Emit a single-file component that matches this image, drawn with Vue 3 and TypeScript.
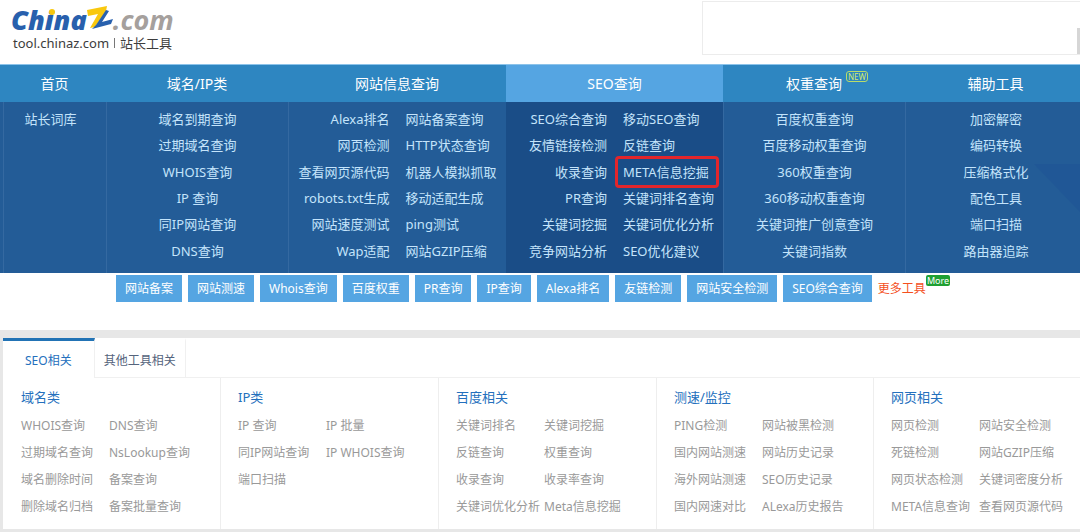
<script setup lang="ts">
import { ref } from 'vue'

interface MenuLink { label: string; marked?: boolean }
interface MenuColumn { title: string; active?: boolean; isNew?: boolean; lists: MenuLink[][] }
interface ToolGroup { title: string; links: string[] }

const toLinks = (...labels: string[]): MenuLink[] => labels.map((label) => ({ label }))

const columns: MenuColumn[] = [
  { title: '首页', lists: [toLinks('站长词库')] },
  {
    title: '域名/IP类',
    lists: [toLinks('域名到期查询', '过期域名查询', 'WHOIS查询', 'IP 查询', '同IP网站查询', 'DNS查询')],
  },
  {
    title: '网站信息查询',
    lists: [
      toLinks('Alexa排名', '网页检测', '查看网页源代码', 'robots.txt生成', '网站速度测试', 'Wap适配'),
      toLinks('网站备案查询', 'HTTP状态查询', '机器人模拟抓取', '移动适配生成', 'ping测试', '网站GZIP压缩'),
    ],
  },
  {
    title: 'SEO查询',
    active: true,
    lists: [
      toLinks('SEO综合查询', '友情链接检测', '收录查询', 'PR查询', '关键词挖掘', '竞争网站分析'),
      [
        { label: '移动SEO查询' },
        { label: '反链查询' },
        { label: 'META信息挖掘', marked: true },
        { label: '关键词排名查询' },
        { label: '关键词优化分析' },
        { label: 'SEO优化建议' },
      ],
    ],
  },
  {
    title: '权重查询',
    isNew: true,
    lists: [toLinks('百度权重查询', '百度移动权重查询', '360权重查询', '360移动权重查询', '关键词推广创意查询', '关键词指数')],
  },
  {
    title: '辅助工具',
    lists: [toLinks('加密解密', '编码转换', '压缩格式化', '配色工具', '端口扫描', '路由器追踪')],
  },
]

const quickLinks: string[] = [
  '网站备案', '网站测速', 'Whois查询', '百度权重', 'PR查询',
  'IP查询', 'Alexa排名', '友链检测', '网站安全检测', 'SEO综合查询',
]

const tabs: string[] = ['SEO相关', '其他工具相关']
const currentTab = ref<number>(0)

const groups: ToolGroup[] = [
  {
    title: '域名类',
    links: ['WHOIS查询', 'DNS查询', '过期域名查询', 'NsLookup查询', '域名删除时间', '备案查询', '删除域名归档', '备案批量查询'],
  },
  { title: 'IP类', links: ['IP 查询', 'IP 批量', '同IP网站查询', 'IP WHOIS查询', '端口扫描'] },
  {
    title: '百度相关',
    links: ['关键词排名', '关键词挖掘', '反链查询', '权重查询', '收录查询', '收录率查询', '关键词优化分析', 'Meta信息挖掘'],
  },
  {
    title: '测速/监控',
    links: ['PING检测', '网站被黑检测', '国内网站测速', '网站历史记录', '海外网站测速', 'SEO历史记录', '国内网速对比', 'ALexa历史报告'],
  },
  {
    title: '网页相关',
    links: ['网页检测', '网站安全检测', '死链检测', '网站GZIP压缩', '网页状态检测', '关键词密度分析', 'META信息查询', '查看网页源代码'],
  },
]
</script>

<template>
  <div class="page">
    <header class="top">
      <a class="brand" href="#">
        <span class="logo">
          <span class="logo-name">China</span>
          <svg class="logo-z" viewBox="0 0 26 24" aria-hidden="true">
            <path d="M0 4 L20 0 L19 5 L8 21 L3 22 L11 8 L1 10 Z" fill="#f9c80e" />
            <path d="M19 4 L22 5 L15 16 L26 13 L24 18 L5 23 L9 19 Z" fill="#2860ad" />
          </svg>
          <span class="logo-tld">.com</span>
        </span>
        <span class="tagline"><span>tool.chinaz.com</span><i class="bar"></i><span>站长工具</span></span>
      </a>
      <div class="banner"><span class="banner-tag"></span></div>
    </header>

    <nav class="menu">
      <section v-for="col in columns" :key="col.title" class="menu-col" :class="{ active: col.active }">
        <a class="menu-title" href="#">
          <span class="title-text">{{ col.title }}<span v-if="col.isNew" class="new">NEW</span></span>
        </a>
        <div class="drop" :class="{ pair: col.lists.length > 1 }">
          <ul v-for="(list, n) in col.lists" :key="n">
            <li v-for="link in list" :key="link.label">
              <a href="#" :class="{ marked: link.marked }">{{ link.label }}</a>
            </li>
          </ul>
        </div>
      </section>
      <svg class="ribbon" viewBox="0 0 46 52" aria-hidden="true">
        <path d="M0 0 H46 V48 Z" fill="#1b4e95" />
      </svg>
    </nav>

    <div class="quick">
      <a v-for="q in quickLinks" :key="q" class="quick-link" href="#">{{ q }}</a>
      <a class="more" href="#">更多工具<span class="more-tag">More</span></a>
    </div>

    <main class="panel">
      <div class="tabs" role="tablist">
        <button
          v-for="(tab, n) in tabs"
          :key="tab"
          type="button"
          role="tab"
          class="tab"
          :class="{ on: n === currentTab }"
          :aria-selected="n === currentTab"
          @click="currentTab = n"
        >{{ tab }}</button>
      </div>
      <div class="groups">
        <section v-for="g in groups" :key="g.title" class="group">
          <h2>{{ g.title }}</h2>
          <ul>
            <li v-for="l in g.links" :key="l"><a href="#">{{ l }}</a></li>
          </ul>
        </section>
      </div>
    </main>
  </div>
</template>

<style>
body {
  margin: 0;
  background: #e7e7e7;
}
</style>

<style scoped>
.page {
  font-family: "Noto Sans", "Noto Sans CJK SC", sans-serif;
  font-size: 13px;
  overflow: hidden;
}
a {
  color: inherit;
  text-decoration: none;
  white-space: nowrap;
}
ul {
  list-style: none;
  margin: 0;
  padding: 0;
}
.top {
  display: flex;
  justify-content: space-between;
  align-items: flex-start;
  height: 64px;
  background: #fff;
}
.brand {
  display: flex;
  flex-direction: column;
  padding: 6px 0 0 11px;
}
.logo {
  display: flex;
  align-items: flex-start;
  height: 28px;
  font-family: "Open Sans", sans-serif;
  font-size: 27px;
  line-height: 28px;
  font-weight: 800;
  font-style: italic;
}
.logo-name {
  position: relative;
  color: #2860ad;
}
.logo-name::after {
  content: "";
  position: absolute;
  top: 3px;
  left: 38px;
  width: 6px;
  height: 6px;
  border-radius: 3px;
  background: #f9c80e;
}
.logo-z {
  width: 26px;
  height: 24px;
}
.logo-tld {
  color: #a5a09d;
  font-weight: 700;
}
.tagline {
  display: flex;
  align-items: center;
  gap: 5px;
  padding-left: 2px;
  font-size: 13px;
  line-height: 18px;
  color: #3c3c3c;
}
.bar {
  width: 1px;
  height: 10px;
  background: #777;
}
.banner {
  display: flex;
  justify-content: flex-end;
  align-items: flex-end;
  box-sizing: border-box;
  width: 35%;
  height: 54px;
  margin-top: 1px;
  border: 1px solid #ececec;
  border-right: 0;
}
.banner-tag {
  width: 3px;
  height: 26px;
  background: #d6d6d6;
}
.menu {
  position: relative;
  display: grid;
  grid-template-columns: 106fr 182fr 218fr 217fr 182fr 175fr;
  border-top: 1px solid #8cc3ea;
}
.menu-col {
  display: flex;
  flex-direction: column;
  min-width: 0;
}
.menu-title {
  padding-top: 1px;
  background: #2e86c1;
  color: #fff;
  font-size: 14px;
  line-height: 36px;
  text-align: center;
}
.title-text {
  position: relative;
}
.new {
  position: absolute;
  left: 100%;
  top: -3px;
  margin-left: 4px;
  padding: 0 1px;
  border: 1px solid #b9dc6a;
  border-radius: 3px;
  color: #d3ea6c;
  font-size: 8px;
  line-height: 9px;
}
.drop {
  flex: 1;
  display: grid;
  box-sizing: border-box;
  min-height: 171px;
  padding: 4px 0 9px;
  border-left: 1px solid #3469a1;
  background: #235c97;
  color: #c4e4fb;
  text-align: center;
}
.drop ul {
  display: grid;
  grid-template-rows: repeat(6, 1fr);
  align-items: center;
}
.drop a {
  position: relative;
  display: inline-block;
  line-height: 26px;
}
.pair {
  grid-template-columns: 1fr 1fr;
  gap: 16px;
}
.pair ul:first-child {
  text-align: right;
}
.pair ul:last-child {
  text-align: left;
}
.menu-col:first-child .menu-title {
  padding-left: 3px;
}
.menu-col:first-child .drop {
  padding-right: 5px;
  border-left: 0;
  background: linear-gradient(#3469a1, #3469a1) 3px 0 / 1px 100% no-repeat #235c97;
}
.menu-col:last-of-type .menu-title,
.menu-col:last-of-type .drop {
  padding-left: 6px;
}
.active .menu-title {
  background: #55a5e2;
}
.active .drop {
  border-color: #1a4d87;
  background: #1a4d87;
}
.drop .marked::after {
  content: "";
  position: absolute;
  inset: -3px -10px -3px -8px;
  border: 3px solid #e2252b;
  border-radius: 4px;
}
.ribbon {
  position: absolute;
  right: 0;
  top: 99px;
  width: 46px;
  height: 52px;
  opacity: 0.35;
  pointer-events: none;
}
.quick {
  display: flex;
  gap: 6px;
  padding: 2px 0 28px 116px;
  background: #fff;
  font-size: 12px;
  line-height: 27px;
}
.quick-link {
  padding: 0 9px;
  background: #55a5e2;
  color: #fff;
}
.more {
  position: relative;
  color: #f4501e;
}
.more-tag {
  position: absolute;
  left: 100%;
  top: 0;
  padding: 0 1px;
  border-radius: 2px;
  background: #1fa033;
  color: #fff;
  font-size: 9px;
  line-height: 11px;
}
.panel {
  margin: 8px 0 3px 3px;
  background: #fff;
}
.tabs {
  display: flex;
  border-bottom: 1px solid #f0f0f0;
}
.tab {
  box-sizing: border-box;
  height: 39px;
  padding: 1px 9px 0;
  border: 0;
  border-top: 3px solid transparent;
  border-right: 1px solid #f0f0f0;
  background: #fff;
  color: #55647c;
  font: inherit;
  font-size: 12px;
}
.tab.on {
  padding: 0 22px;
  margin-bottom: -1px;
  height: 40px;
  border-top-color: #2273b5;
  color: #2470bd;
}
.groups {
  display: grid;
  grid-template-columns: 217fr 218fr 218fr 217fr 207fr;
}
.group {
  min-width: 0;
  padding: 5px 0 9px 17px;
  border-left: 1px solid #eee;
}
.group:first-child {
  padding-left: 18px;
  border-left: 0;
}
.group h2 {
  margin: 0;
  color: #2470bd;
  font-size: 13px;
  font-weight: 400;
  line-height: 29px;
}
.group ul {
  display: grid;
  grid-template-columns: 88px 1fr;
  color: #999;
  font-size: 12px;
  line-height: 27px;
}
</style>
